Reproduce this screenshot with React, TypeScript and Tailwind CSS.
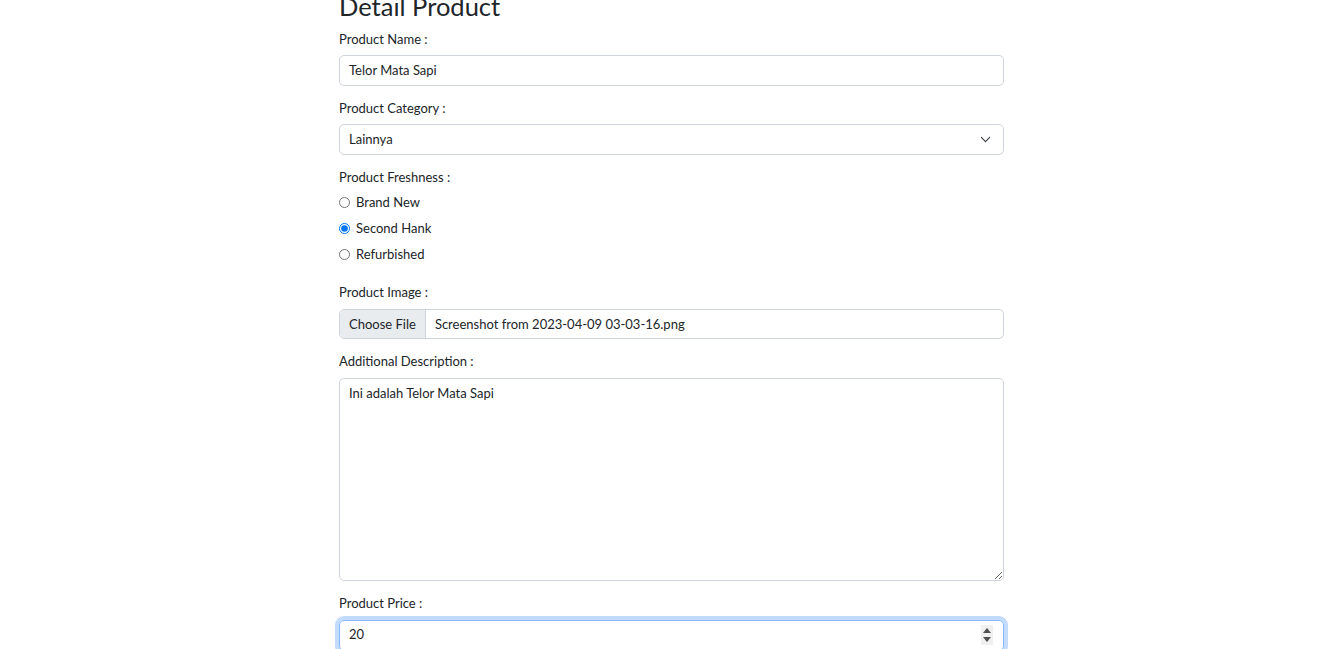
import React from "react";

const font = { fontFamily: 'Lato, "Noto Sans", sans-serif' };

function Label({ children, className = "" }: { children: React.ReactNode; className?: string }) {
  return (
    <div className={"h-[21px] leading-[20px] text-[13px] text-[#212529] " + className}>{children}</div>
  );
}

function Radio({ label, checked }: { label: string; checked?: boolean }) {
  return (
    <label className="flex items-center h-[26px] text-[13px] text-[#212529]">
      <input type="radio" name="fresh" defaultChecked={checked} className="m-0 w-[11px] h-[11px] ml-[0px]" />
      <span className="ml-[6px] leading-[20px]">{label}</span>
    </label>
  );
}

export default function App() {
  return (
    <div className="w-full h-[649px] overflow-hidden bg-white" style={font}>
      <div className="flex justify-center pl-[5px]">
        <div className="w-[665px] flex flex-col">
          <div className="mt-[-9px] h-[38px] leading-[30px] text-[25.5px] text-[#212529]">Detail Product</div>
          <Label>Product Name :</Label>
          <div className="mt-[5px] h-[31px] border border-[#ced4da] rounded-[5px] flex items-center px-[9px] pb-[2px] text-[13px] leading-[20px] text-[#212529]">
            Telor Mata Sapi
          </div>
          <Label className="mt-[12px]">Product Category :</Label>
          <div className="mt-[5px] h-[31px] border border-[#ced4da] rounded-[5px] flex items-center px-[9px] text-[13px] leading-[20px] text-[#212529] justify-between">
            <span className="mb-[2px]">Lainnya</span>
            <svg width="11" height="11" viewBox="0 0 16 16" className="mr-[3px]">
              <path d="M2 5l6 6 6-6" fill="none" stroke="#343a40" strokeWidth="1.6" strokeLinecap="round" strokeLinejoin="round" />
            </svg>
          </div>
          <Label className="mt-[12px]">Product Freshness :</Label>
          <div className="flex flex-col mt-[1px]">
            <Radio label="Brand New" />
            <Radio label="Second Hank" checked />
            <Radio label="Refurbished" />
          </div>
          <Label className="mt-[15px]">Product Image :</Label>
          <div className="mt-[6px] h-[30px] border border-[#ced4da] rounded-[5px] flex items-stretch text-[13px] leading-[20px] text-[#212529] overflow-hidden">
            <div className="bg-[#e9ecef] border-r border-[#ced4da] px-[9px] pb-[1px] flex items-center">Choose File</div>
            <div className="px-[9px] pb-[1px] flex items-center">Screenshot from 2023-04-09 03-03-16.png</div>
          </div>
          <Label className="mt-[12px]">Additional Description :</Label>
          <textarea
            readOnly
            defaultValue="Ini adalah Telor Mata Sapi"
            className="mt-[6px] h-[203px] border border-[#ced4da] rounded-[5px] px-[9px] py-[4px] text-[13px] leading-[20px] text-[#212529] resize-y outline-none"
            style={font}
          />
          <Label className="mt-[12px]">Product Price :</Label>
          <div className="mt-[6px] h-[31px] border border-[#86b7fe] rounded-[5px] flex items-center pl-[9px] pr-[9px] text-[13px] leading-[20px] text-[#212529] justify-between shadow-[0_0_0_4px_rgba(13,110,253,0.25)]">
            <span className="mb-[3px]">20</span>
            <div className="w-[12px] h-[20px] bg-[#f0f0f0] flex flex-col items-center justify-center gap-[4px] mr-[1px] mb-[1px]">
              <svg width="8" height="5" viewBox="0 0 8 5"><path d="M0 5L4 0L8 5Z" fill="#505050" /></svg>
              <svg width="8" height="5" viewBox="0 0 8 5"><path d="M0 0L4 5L8 0Z" fill="#505050" /></svg>
            </div>
          </div>
        </div>
      </div>
    </div>
  );
}
